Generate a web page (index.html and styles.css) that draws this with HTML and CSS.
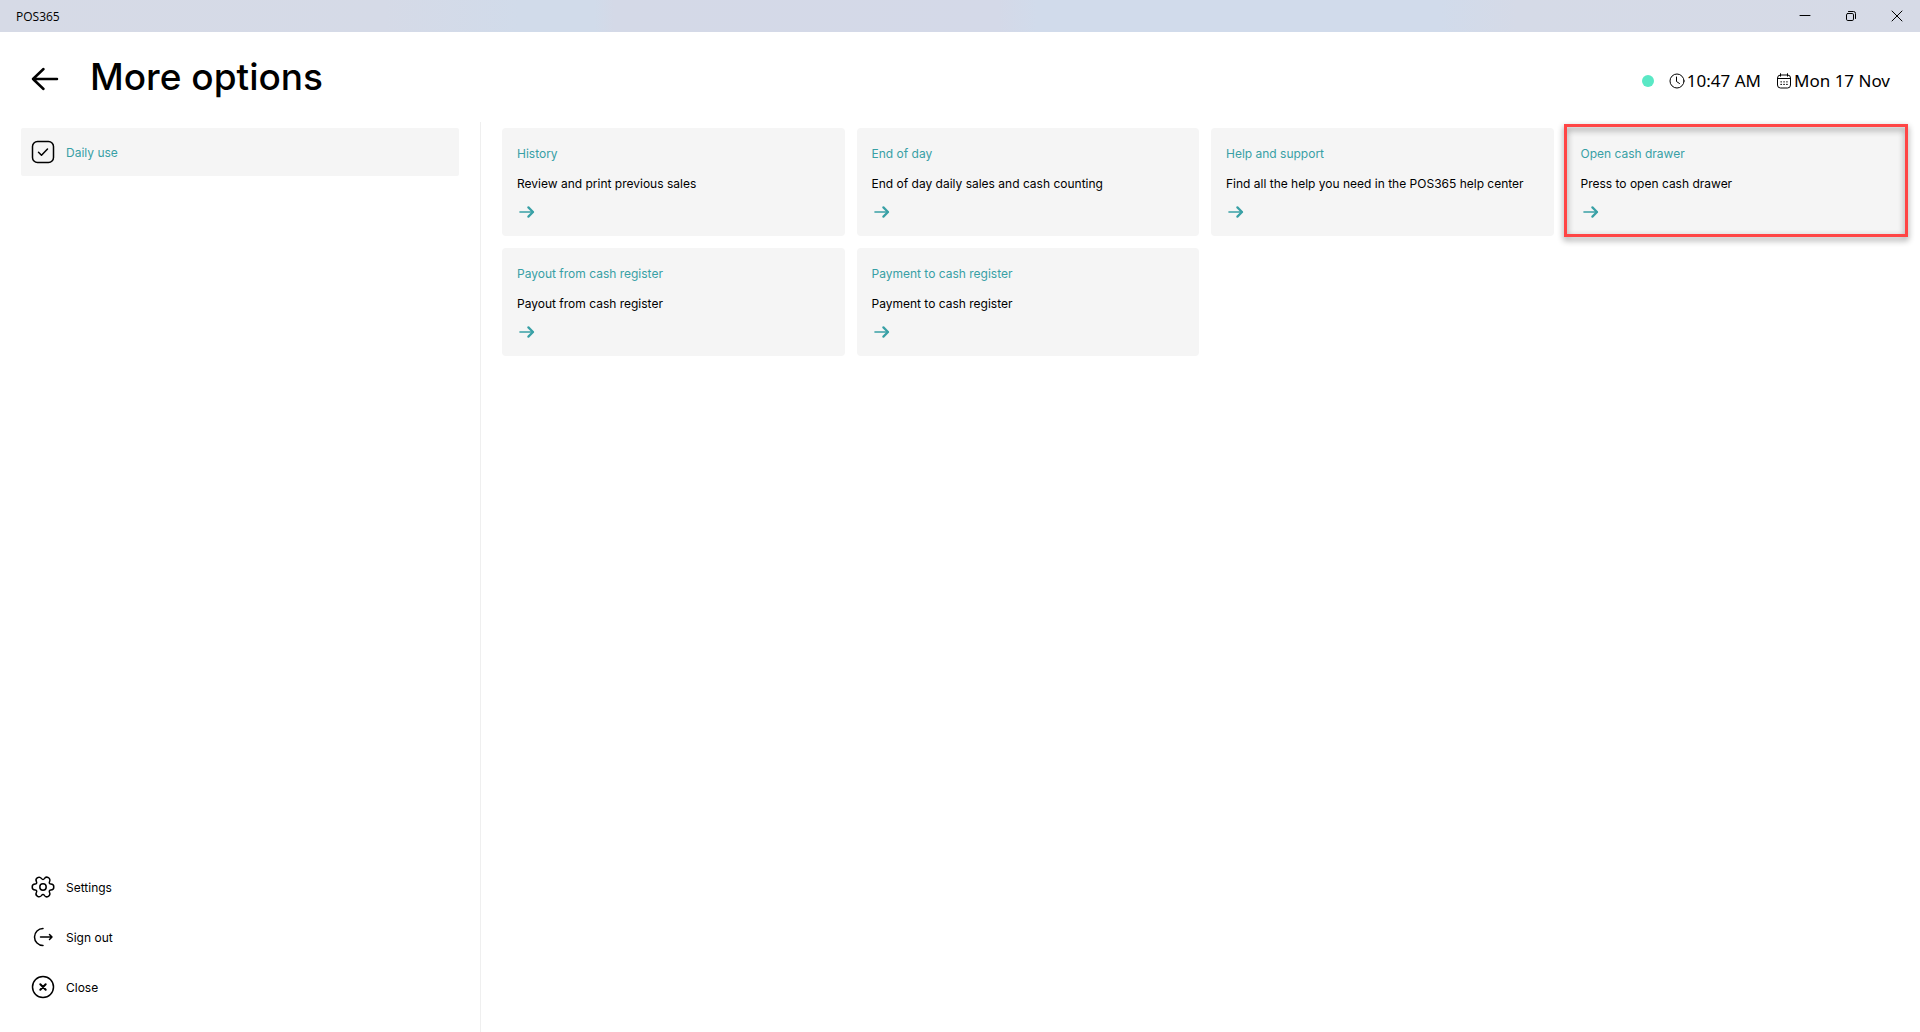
FILE: index.html
```html
<!DOCTYPE html>
<html lang="en">
<head>
    <meta charset="UTF-8">
    <meta name="viewport" content="width=device-width, initial-scale=1.0">
    <title>POS365</title>
    <link rel="stylesheet" href="styles.css">
</head>
<body>
    <!-- shared icon -->
    <svg class="sprite" aria-hidden="true">
        <symbol id="arrow" viewBox="0 0 16 12">
            <path d="M1 6h13" stroke-width="1.6"/>
            <path d="M9.4 1.4L14 6l-4.600 4.600" stroke-width="2.200"/>
        </symbol>
    </svg>

    <div class="titlebar">
        <span class="app-name">POS365</span>
        <div class="window-buttons">
            <button type="button" aria-label="Minimize">
                <svg width="12" height="12" viewBox="0 0 12 12"><path d="M1 5.500h10"/></svg>
            </button>
            <button type="button" aria-label="Restore">
                <svg width="12" height="12" viewBox="0 0 12 12"><rect x="1.500" y="3.500" width="7" height="7" rx="1.300"/><path d="M3.500 1.500h5a2 2 0 0 1 2 2v5"/></svg>
            </button>
            <button type="button" aria-label="Close window">
                <svg width="12" height="12" viewBox="0 0 12 12"><path d="M1 1l10 10M11 1L1 11"/></svg>
            </button>
        </div>
    </div>

    <header class="header">
        <button type="button" class="back" aria-label="Back">
            <svg width="28" height="24" viewBox="0 0 28 24"><path d="M26 12H2M12.500 2L2 12l10.500 10"/></svg>
        </button>
        <h1>More options</h1>
        <div class="status">
            <span class="online"></span>
            <span class="stamp">
                <svg width="16" height="16" viewBox="0 0 16 16"><circle cx="8" cy="8" r="7"/><path d="M7.500 4v4.500l3 2"/></svg>
                10:47 AM
            </span>
            <span class="stamp">
                <svg width="16" height="16" viewBox="0 0 16 16"><rect x="1.500" y="2" width="13" height="13" rx="3"/><path d="M1.500 5.500h13M4.500 .7v2.500M11.500 .7v2.500"/><path d="M5 8.800h.3M7.900 8.800h.3M10.800 8.800h.3M5 11.400h.3M7.900 11.400h.3M10.800 11.400h.3" stroke-width="1.300"/></svg>
                Mon 17 Nov
            </span>
        </div>
    </header>

    <div class="content">
        <nav class="sidebar">
            <button type="button" class="nav-item active">
                <svg width="24" height="24" viewBox="0 0 24 24"><rect x="1.500" y="1.500" width="21" height="21" rx="5"/><path d="M7.500 12.300l3 3 6-6.300"/></svg>
                Daily use
            </button>
            <div class="nav-bottom">
                <button type="button" class="nav-item">
                    <svg width="24" height="24" viewBox="0 0 24 24"><circle cx="12" cy="12" r="3.200"/><path d="M19.800 9A3 3 0 0 1 19.800 15A1.500 1.500 0 0 0 18.500 17.250A3 3 0 0 1 13.300 20.250A1.500 1.500 0 0 0 10.700 20.250A3 3 0 0 1 5.500 17.250A1.500 1.500 0 0 0 4.200 15A3 3 0 0 1 4.200 9A1.500 1.500 0 0 0 5.500 6.750A3 3 0 0 1 10.700 3.750A1.500 1.500 0 0 0 13.300 3.750A3 3 0 0 1 18.500 6.750A1.500 1.500 0 0 0 19.800 9Z"/></svg>
                    Settings
                </button>
                <button type="button" class="nav-item">
                    <svg width="24" height="24" viewBox="0 0 24 24"><path d="M12 3.500a8.500 8.500 0 0 0 0 17M9.500 12h11.500M18.500 9.500l2.500 2.500-2.500 2.500"/></svg>
                    Sign out
                </button>
                <button type="button" class="nav-item">
                    <svg width="24" height="24" viewBox="0 0 24 24"><circle cx="12" cy="12" r="10.500"/><path d="M9.300 9.300l5.400 5.400M14.700 9.300l-5.400 5.400" stroke-width="2"/></svg>
                    Close
                </button>
            </div>
        </nav>

        <main class="cards">
            <button type="button" class="card">
                <span class="card-title">History</span>
                <span class="card-text">Review and print previous sales</span>
                <svg class="arrow"><use href="#arrow"/></svg>
            </button>
            <button type="button" class="card">
                <span class="card-title">End of day</span>
                <span class="card-text">End of day daily sales and cash counting</span>
                <svg class="arrow"><use href="#arrow"/></svg>
            </button>
            <button type="button" class="card">
                <span class="card-title">Help and support</span>
                <span class="card-text">Find all the help you need in the POS365 help center</span>
                <svg class="arrow"><use href="#arrow"/></svg>
            </button>
            <button type="button" class="card highlighted">
                <span class="card-title">Open cash drawer</span>
                <span class="card-text">Press to open cash drawer</span>
                <svg class="arrow"><use href="#arrow"/></svg>
            </button>
            <button type="button" class="card">
                <span class="card-title">Payout from cash register</span>
                <span class="card-text">Payout from cash register</span>
                <svg class="arrow"><use href="#arrow"/></svg>
            </button>
            <button type="button" class="card">
                <span class="card-title">Payment to cash register</span>
                <span class="card-text">Payment to cash register</span>
                <svg class="arrow"><use href="#arrow"/></svg>
            </button>
        </main>
    </div>
</body>
</html>
```
FILE: styles.css
```css
body {
    margin: 0;
    min-height: 100vh;
    display: flex;
    flex-direction: column;
    font-family: Inter, Arial, sans-serif;
    font-size: 12px;
    color: #000;
    background-color: #fff;
}

button {
    border: none;
    padding: 0;
    background: none;
    font: inherit;
    color: inherit;
    cursor: pointer;
}

svg {
    display: block;
    flex: none;
    fill: none;
    stroke: currentColor;
    stroke-linecap: round;
    stroke-linejoin: round;
}

.sprite {
    position: absolute;
    width: 0;
    height: 0;
}

/* window title bar */
.titlebar {
    display: flex;
    justify-content: space-between;
    height: 32px;
    background: linear-gradient(90deg, #d6dae6, #d5dae7 20%, #d1dbea 27%, #d1dbea 31%, #d4d9e7 32%, #d4d9e8 52%, #d1dbeb 54%, #d1dbeb 75%, #d5dae7 79%, #d6dae6);
}

.app-name {
    padding-left: 16px;
    font-family: "Open Sans", sans-serif;
    font-size: 12px;
    line-height: 34px;
}

.window-buttons {
    display: flex;
}

.window-buttons button {
    display: flex;
    align-items: center;
    justify-content: center;
    width: 46px;
}

/* page header */
.header {
    display: flex;
    align-items: center;
    height: 90px;
    padding: 0 30px 0 31px;
}

.back {
    padding-top: 3px;
}

.back svg {
    stroke-width: 2.500;
}

h1 {
    margin: 0 0 0 31px;
    font-size: 37px;
    font-weight: 500;
    line-height: 44px;
}

.status {
    display: flex;
    align-items: center;
    gap: 15px;
    margin-left: auto;
    padding-top: 8px;
    font-family: "Noto Sans", sans-serif;
    font-size: 17px;
    line-height: 24px;
}

.online {
    width: 12px;
    height: 12px;
    border-radius: 50%;
    background-color: #5ae8c5;
}

.stamp {
    display: flex;
    align-items: center;
    gap: 2px;
}

/* menu and cards */
.content {
    flex: 1;
    display: grid;
    grid-template-columns: 25% 1fr;
}

.sidebar {
    display: flex;
    flex-direction: column;
    justify-content: space-between;
    padding: 6px 21px 21px;
}

.nav-item {
    display: flex;
    align-items: center;
    gap: 11px;
    width: 100%;
    height: 48px;
    padding: 0 10px;
    border-radius: 2px;
}

.nav-item svg {
    stroke-width: 1.500;
}

.nav-item.active {
    background-color: #f5f5f5;
    color: #38a0a5;
}

.nav-item.active svg {
    color: #000;
}

.nav-bottom {
    display: grid;
    gap: 2px;
}

.cards {
    display: grid;
    grid-template-columns: repeat(4, 1fr);
    align-content: start;
    gap: 12px;
    padding: 6px 12px 6px 21px;
    border-left: 1px solid #efefef;
}

.card {
    display: flex;
    flex-direction: column;
    align-items: flex-start;
    height: 108px;
    padding: 16px 15px;
    border-radius: 4px;
    background-color: #f5f5f5;
    line-height: 20px;
    text-align: left;
}

.card-title {
    color: #38a0a5;
}

.card-text {
    padding-top: 10px;
}

.arrow {
    width: 16px;
    height: 12px;
    margin: 12px 2px;
    color: #38a0a5;
}

/* red frame lies over the card */
.highlighted {
    position: relative;
}

.highlighted::after {
    content: "";
    position: absolute;
    inset: -4px 0 -1px -2px;
    border: 3px solid #ff4545;
    filter: drop-shadow(0 3px 3px #888);
}
```
